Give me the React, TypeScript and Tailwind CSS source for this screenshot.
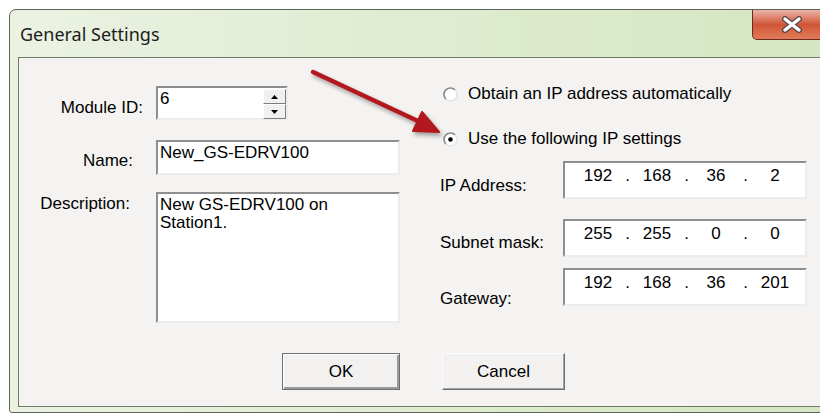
import { Fragment } from "react";

const sunken =
  "border-2 border-t-[#8e8e8e] border-l-[#8e8e8e] border-b-[#ececec] border-r-[#ececec] bg-white";

const Radio = ({ checked }: { checked?: boolean }) => (
  <svg width="15" height="15" viewBox="0 0 15 15" className="shrink-0">
    <circle cx="7.5" cy="7.5" r="6.5" fill="#fff" />
    <path d="M2.9 12.1 A6.5 6.5 0 0 1 12.1 2.9" stroke="#8c8c8c" strokeWidth="1.7" fill="none" />
    <path d="M12.1 2.9 A6.5 6.5 0 0 1 2.9 12.1" stroke="#e4e4e4" strokeWidth="1.4" fill="none" />
    {checked && <circle cx="7.5" cy="7.5" r="2.3" fill="#000" />}
  </svg>
);

const SpinButton = ({ up }: { up?: boolean }) => (
  <div className="w-[23px] h-[15px] bg-[#f0f0f0] border border-t-white border-l-white border-b-[#7d7d7d] border-r-[#7d7d7d] flex items-center justify-center">
    <svg width="7" height="4" viewBox="0 0 7 4">
      {up ? <path d="M3.5 0 L7 4 L0 4 Z" fill="#000" /> : <path d="M0 0 L7 0 L3.5 4 Z" fill="#000" />}
    </svg>
  </div>
);

const IpBox = ({ parts }: { parts: string[] }) => (
  <div className={`${sunken} w-[244px] h-[38px] flex items-start pl-[8px] pt-[3px]`}>
    {parts.map((p, i) => (
      <Fragment key={i}>
        {i > 0 && <span className="w-[9px] text-center">.</span>}
        <span className="w-[50px] text-center">{p}</span>
      </Fragment>
    ))}
  </div>
);

const WinButton = ({ label, primary }: { label: string; primary?: boolean }) => (
  <div
    className={
      primary
        ? "h-[37px] w-[118px] border border-[#6f6f6f] shadow-[inset_1px_1px_0_#fff,inset_-2px_-2px_0_#9a9a9a] bg-[#f2f1ef] flex items-center justify-center"
        : "h-[37px] w-[123px] border border-t-[#fbfbfb] border-l-[#fbfbfb] border-b-[#6f6f6f] border-r-[#6f6f6f] shadow-[inset_-1px_-1px_0_#a4a4a4] bg-[#f2f1ef] flex items-center justify-center"
    }
  >
    {label}
  </div>
);

const App = () => {
  return (
    <div className="relative w-[820px] h-[414px] overflow-hidden bg-white font-['Liberation_Sans',sans-serif] text-[17px] leading-[20px] text-black">
      <div className="ml-[9px] mt-[9px] w-[830px] h-[404px] rounded-tl-[7px] rounded-bl-[3px] border border-[#5b6656] bg-gradient-to-r from-[#ebf2e2] via-[#dfecd0] to-[#d5e6c1] flex flex-col">
        {/* title bar */}
        <div className="h-[47px] flex items-start shrink-0">
          <div className="h-full flex items-center pl-[10px] font-['Noto_Sans',sans-serif] text-[18px] text-[#1c1c1c]">
            General Settings
          </div>
          <div className="ml-auto mr-[6px] w-[80px] h-[30px] rounded-b-[5px] border border-t-0 border-[#6b2a1e] bg-gradient-to-b from-[#eab3a6] via-[#cf5536] to-[#e07a58] flex items-center justify-center pr-[1px]">
            <svg width="22" height="17" viewBox="0 0 22 17">
              <path d="M4 3 L18 14 M18 3 L4 14" stroke="#5a4a50" strokeWidth="6" strokeLinecap="round" />
              <path d="M4 3 L18 14 M18 3 L4 14" stroke="#ffffff" strokeWidth="3.4" strokeLinecap="round" />
            </svg>
          </div>
        </div>

        {/* client area */}
        <div className="ml-[8px] h-[350px] border border-r-0 border-[#6f7c69] bg-[#f4f3f1] flex flex-col">
          <div className="h-[295px] flex">
            {/* left column */}
            <div className="w-[421px] pt-[28px] flex flex-col">
              <div className="flex items-start">
                <div className="w-[137px] text-right pr-[13px] mt-[12px]">Module ID:</div>
                <div className={`${sunken} w-[132px] h-[34px] flex items-start`}>
                  <div className="flex-1 pl-[2px] pt-[1px]">6</div>
                  <div className="flex flex-col pt-[1px]">
                    <SpinButton up />
                    <SpinButton />
                  </div>
                </div>
              </div>
              <div className="flex items-start mt-[20px]">
                <div className="w-[137px] text-right pr-[23px] mt-[11px]">Name:</div>
                <div className={`${sunken} w-[244px] h-[35px] pl-[2px] pt-[1px]`}>New_GS-EDRV100</div>
              </div>
              <div className="flex items-start mt-[17px]">
                <div className="w-[137px] text-right pr-[26px] mt-[2px]">Description:</div>
                <div className={`${sunken} w-[244px] h-[131px] pl-[2px] pt-[2px] leading-[18px]`}>
                  New GS-EDRV100 on
                  <br />
                  Station1.
                </div>
              </div>
            </div>

            {/* right column */}
            <div className="flex-1 pt-[26px] flex flex-col">
              <div className="flex items-center pl-[3px] gap-[10px]">
                <Radio />
                <span>Obtain an IP address automatically</span>
              </div>
              <div className="flex items-center pl-[3px] gap-[10px] mt-[25px]">
                <Radio checked />
                <span>Use the following IP settings</span>
              </div>
              <div className="flex items-start mt-[12px]">
                <div className="w-[123px] mt-[15px]">IP Address:</div>
                <IpBox parts={["192", "168", "36", "2"]} />
              </div>
              <div className="flex items-start mt-[20px]">
                <div className="w-[123px] mt-[14px]">Subnet mask:</div>
                <IpBox parts={["255", "255", "0", "0"]} />
              </div>
              <div className="flex items-start mt-[11px]">
                <div className="w-[123px] mt-[21px]">Gateway:</div>
                <IpBox parts={["192", "168", "36", "201"]} />
              </div>
            </div>
          </div>

          <div className="flex pl-[263px] gap-[42px]">
            <WinButton label="OK" primary />
            <WinButton label="Cancel" />
          </div>
        </div>
      </div>

      {/* red pointer arrow over the dialog */}
      <svg
        className="absolute left-0 top-0 pointer-events-none drop-shadow-[2px_3px_2px_rgba(0,0,0,0.35)]"
        width="820"
        height="414"
        viewBox="0 0 820 414"
      >
        <path d="M313 72 L420 122" stroke="#b3181f" strokeWidth="4.5" strokeLinecap="round" />
        <path d="M439 132 L413 131 L422 112 Z" fill="#b3181f" stroke="#b3181f" strokeWidth="2" strokeLinejoin="round" />
      </svg>
    </div>
  );
};

export default App;
